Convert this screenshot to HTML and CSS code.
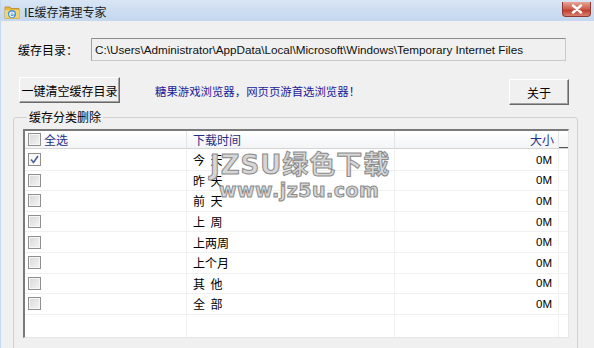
FILE: index.html
```html
<!DOCTYPE html>
<html lang="zh-CN">
<head>
  <meta charset="UTF-8">
  <title>IE缓存清理专家</title>
  <link rel="stylesheet" href="styles.css">
</head>
<body>
  <div class="window">
    <div class="titlebar">
      <svg class="app-icon" width="16" height="16" viewBox="0 0 16 16">
        <path d="M1 3h5l1 1.5h8v10H1z" fill="#e9b93a" stroke="#b7862a" stroke-width="0.8"/>
        <path d="M1 6h14v8.5H1z" fill="#f5d36b"/>
        <circle cx="8" cy="10" r="4" fill="#3d8fe0"/>
        <path d="M5.6 10h4.8M10.3 9.8a2.3 2.3 0 1 0-0.4 1.9" fill="none" stroke="#fff" stroke-width="1.2"/>
      </svg>
      <span class="title">IE缓存清理专家</span>
      <div class="close">
        <svg width="12" height="10" viewBox="0 0 12 10">
          <path d="M2 1.5l8 7M10 1.5l-8 7" stroke="#fff" stroke-width="2.4" stroke-linecap="round"/>
        </svg>
      </div>
    </div>

    <div class="content">
      <div class="dir-row">
        <span class="label">缓存目录：</span>
        <div class="field">C:\Users\Administrator\AppData\Local\Microsoft\Windows\Temporary Internet Files</div>
      </div>

      <div class="action-row">
        <button class="btn btn-clear">一键清空缓存目录</button>
        <span class="promo">糖果游戏浏览器，网页页游首选浏览器！</span>
        <button class="btn btn-about">关于</button>
      </div>

      <fieldset class="group">
        <legend>缓存分类删除</legend>
        <div class="list">
          <div class="list-head">
            <div class="col col-check"><span class="box"></span><span class="head-text">全选</span></div>
            <div class="col col-time"><span class="head-text">下载时间</span></div>
            <div class="col col-size"><span class="head-text">大小</span></div>
            <div class="col col-rest"></div>
          </div>
          <div class="list-body">
            <div class="row">
              <div class="col col-check"><span class="box checked"><svg width="9" height="9" viewBox="0 0 9 9"><path d="M1 4.5l2.5 3L8 1" fill="none" stroke="#4c5f9c" stroke-width="1.6"/></svg></span></div>
              <div class="col col-time">今&nbsp;&nbsp;天</div>
              <div class="col col-size">0M</div>
            </div>
            <div class="row">
              <div class="col col-check"><span class="box"></span></div>
              <div class="col col-time">昨&nbsp;&nbsp;天</div>
              <div class="col col-size">0M</div>
            </div>
            <div class="row">
              <div class="col col-check"><span class="box"></span></div>
              <div class="col col-time">前&nbsp;&nbsp;天</div>
              <div class="col col-size">0M</div>
            </div>
            <div class="row">
              <div class="col col-check"><span class="box"></span></div>
              <div class="col col-time">上&nbsp;&nbsp;周</div>
              <div class="col col-size">0M</div>
            </div>
            <div class="row">
              <div class="col col-check"><span class="box"></span></div>
              <div class="col col-time">上两周</div>
              <div class="col col-size">0M</div>
            </div>
            <div class="row">
              <div class="col col-check"><span class="box"></span></div>
              <div class="col col-time">上个月</div>
              <div class="col col-size">0M</div>
            </div>
            <div class="row">
              <div class="col col-check"><span class="box"></span></div>
              <div class="col col-time">其&nbsp;&nbsp;他</div>
              <div class="col col-size">0M</div>
            </div>
            <div class="row">
              <div class="col col-check"><span class="box"></span></div>
              <div class="col col-time">全&nbsp;&nbsp;部</div>
              <div class="col col-size">0M</div>
            </div>
            <div class="row row-empty">
              <div class="col col-check"></div>
              <div class="col col-time"></div>
              <div class="col col-size"></div>
            </div>
          </div>
        </div>
      </fieldset>
    </div>

    <div class="watermark">
      <div class="wm-big">JZSU绿色下载</div>
      <div class="wm-small">www.jz5u.com</div>
    </div>
  </div>
</body>
</html>
```

FILE: styles.css
```css
body {
  margin: 0;
  font-family: "Liberation Sans", "Noto Sans CJK SC", sans-serif;
  font-size: 12px;
  color: #000;
}
.window {
  position: relative;
  width: 594px;
  height: 348px;
  overflow: hidden;
  background: #f0f0f0;
  box-sizing: border-box;
  border-left: 1px solid #c8d9ee;
}
.titlebar {
  height: 21px;
  display: flex;
  align-items: center;
  padding-left: 3px;
  background: linear-gradient(#d8e5f4, #c3d7ee);
}
.app-icon {
  margin-top: 2px;
}
.title {
  margin-left: 4px;
  font-family: "Noto Sans CJK SC", sans-serif;
  font-size: 12px;
  color: #1b1b1b;
  margin-top: 1px;
}
.close {
  margin-left: auto;
  margin-right: 3px;
  margin-top: -3px;
  width: 27px;
  height: 14px;
  display: flex;
  align-items: center;
  justify-content: center;
  border: 1px solid #8a3b33;
  border-top: none;
  border-radius: 0 0 4px 4px;
  background: linear-gradient(#e5a595, #cf5a48 50%, #c0402f 60%, #d8826f);
}
.content {
  padding: 17px 0 0 0;
}
.dir-row {
  display: flex;
  align-items: center;
  padding-left: 17px;
}
.label {
  width: 73px;
  font-family: "Noto Sans CJK SC", sans-serif;
}
.field {
  width: 470px;
  height: 21px;
  line-height: 21px;
  padding-left: 3px;
  border: 1px solid #c9c9c9;
  border-top-color: #8c8c8c;
  border-left-color: #a0a0a0;
  background: #f0f0f0;
  font-size: 11.7px;
  color: #111;
  white-space: nowrap;
  overflow: hidden;
}
.action-row {
  display: flex;
  align-items: flex-start;
  margin-top: 16px;
  padding-left: 18px;
}
.btn {
  font-family: "Noto Sans CJK SC", sans-serif;
  font-size: 12px;
  color: #000;
  background: #f0f0f0;
  border: 1px solid;
  border-color: #fff #696969 #696969 #fff;
  box-shadow: inset -1px -1px 0 #a0a0a0;
  padding: 0;
  height: 26px;
}
.btn-clear {
  width: 101px;
}
.promo {
  margin-left: 35px;
  margin-top: 6px;
  font-family: "Noto Sans CJK SC", sans-serif;
  font-size: 11.4px;
  color: #20209a;
}
.btn-about {
  width: 60px;
  margin-left: auto;
  margin-right: 25px;
  margin-top: 2px;
}
.group {
  margin: 6px 16px 0 12px;
  padding: 6px 8px 0 9px;
  border: 1px solid #d0d0d0;
  border-radius: 3px;
  height: 240px;
}
.group legend {
  padding: 0 2px;
  margin-left: 4px;
  font-family: "Noto Sans CJK SC", sans-serif;
  font-size: 12px;
  line-height: 12px;
}
.list {
  background: #fff;
  border-top: 2px solid #7a7a7a;
  border-left: 2px solid #7a7a7a;
  border-right: 1px solid #e6e6e6;
  border-bottom: 1px solid #e6e6e6;
  height: 206px;
  font-family: "Noto Sans CJK SC", sans-serif;
}
.list-head {
  display: flex;
  height: 17px;
  border-bottom: 1px solid #d5d5d5;
  background: linear-gradient(#ffffff, #f3f4f6);
  color: #1e2f8a;
}
.list-head .col {
  border-right: 1px solid #e3e5e8;
  display: flex;
  align-items: center;
}
.col {
  box-sizing: border-box;
}
.col-check {
  width: 162px;
  padding-left: 3px;
}
.col-time {
  width: 208px;
  padding-left: 6px;
}
.col-size {
  width: 164px;
  justify-content: flex-end;
  text-align: right;
  padding-right: 4px;
}
.col-rest {
  flex: 1;
  border-right: none !important;
  border-bottom: 1px solid #555;
}
.head-text {
  margin-left: 3px;
}
.col-time .head-text {
  margin-left: 0;
}
.list-body {
  padding-top: 1px;
}
.row {
  display: flex;
  height: 20.6px;
  align-items: stretch;
  border-bottom: 1px solid #f0f0f0;
  box-sizing: border-box;
  font-size: 12px;
}
.row .col {
  display: flex;
  align-items: center;
  border-right: 1px solid #f0f0f0;
}
.row .col-size {
  font-family: "Liberation Sans", sans-serif;
  font-size: 11.5px;
  padding-right: 6px;
}
.row-empty {
  height: 22px;
  border-bottom: none;
}
.box {
  display: inline-flex;
  align-items: center;
  justify-content: center;
  width: 11px;
  height: 11px;
  border: 1px solid #8f8f8f;
  background: linear-gradient(135deg, #d8d8d8, #f4f4f4);
  box-shadow: inset 0 0 0 1px #f6f6f6;
}
.box.checked {
  background: linear-gradient(135deg, #f4f4f4, #ffffff);
}
.watermark {
  position: absolute;
  left: 209px;
  top: 150px;
  pointer-events: none;
  font-family: "DejaVu Sans", "Noto Sans CJK SC", sans-serif;
  font-weight: bold;
  color: #d6d6d6;
  -webkit-text-stroke: 1px #8a8a8a;
}
.wm-big {
  font-size: 26px;
  line-height: 30px;
  letter-spacing: 1px;
}
.wm-small {
  margin-left: 9px;
  font-size: 19px;
  line-height: 20px;
  letter-spacing: 0.5px;
}
```
